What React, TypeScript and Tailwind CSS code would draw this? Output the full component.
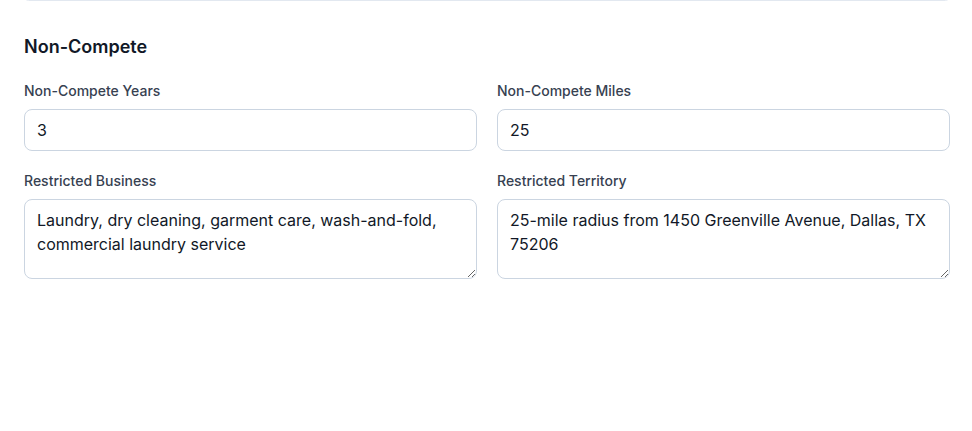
import React from "react";

function Field({ label, children }: { label: string; children: React.ReactNode }) {
  return (
    <div className="flex flex-col gap-2">
      <label className="text-sm leading-5 text-[#374151] font-medium">{label}</label>
      {children}
    </div>
  );
}

export default function App() {
  return (
    <div className="w-[972px] h-[431px] bg-white overflow-hidden" style={{ fontFamily: "Inter, 'Noto Sans', sans-serif" }}>
      <div className="px-6 pr-[22px]">
        <div className="h-[9px] -mt-[8px] border border-[#e2e8f0] rounded-lg" />
      </div>
      <div className="px-6 pr-[22px] pt-[32px]">
        <h2 className="text-lg font-semibold text-[#111827] leading-7">Non-Compete</h2>
        <div className="grid grid-cols-2 gap-x-5 gap-y-5 mt-[20px]">
          <Field label="Non-Compete Years">
            <input
              readOnly
              value="3"
              className="h-[42px] w-full rounded-lg border border-[#cbd5e1] px-3 py-2 text-base text-[#111827] outline-none"
            />
          </Field>
          <Field label="Non-Compete Miles">
            <input
              readOnly
              value="25"
              className="h-[42px] w-full rounded-lg border border-[#cbd5e1] px-3 py-2 text-base text-[#111827] outline-none"
            />
          </Field>
          <Field label="Restricted Business">
            <textarea
              readOnly
              rows={3}
              value="Laundry, dry cleaning, garment care, wash-and-fold, commercial laundry service"
              className="h-[80px] w-full rounded-lg border border-[#cbd5e1] px-3 py-2 text-base leading-6 text-[#111827] outline-none"
            />
          </Field>
          <Field label="Restricted Territory">
            <textarea
              readOnly
              rows={3}
              value="25-mile radius from 1450 Greenville Avenue, Dallas, TX 75206"
              className="h-[80px] w-full rounded-lg border border-[#cbd5e1] px-3 py-2 text-base leading-6 text-[#111827] outline-none"
            />
          </Field>
        </div>
      </div>
    </div>
  );
}
